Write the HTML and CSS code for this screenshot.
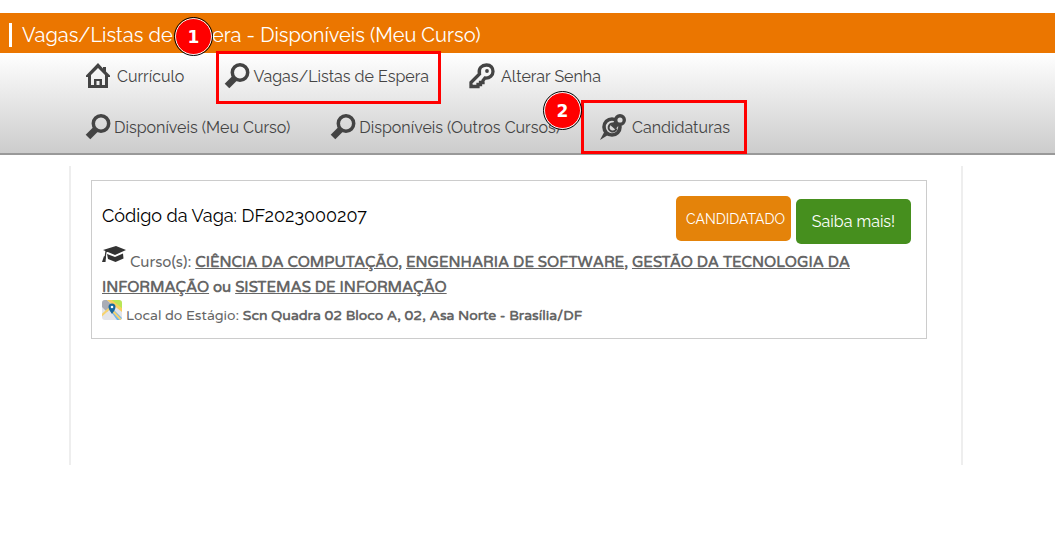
FILE: index.html
```
<!DOCTYPE html>
<html lang="pt-BR">
<head>
<meta charset="utf-8">
<title>Vagas/Listas de Espera</title>
<link rel="stylesheet" href="styles.css">
</head>
<body>
<svg class="sprite" aria-hidden="true">
  <symbol id="search" viewBox="0 0 26 26">
    <path d="M11 15 3 23" fill="none" stroke="currentColor" stroke-width="6.500"/>
    <circle cx="16" cy="9.500" r="7.700" fill="none" stroke="currentColor" stroke-width="3.500"/>
  </symbol>
</svg>
<header class="titlebar"><h1 class="title">Vagas/Listas de Espera - Disponíveis (Meu Curso)</h1><span class="badge badge-one">1</span></header>
<nav class="menu" aria-label="Menu principal">
  <div class="menu-row">
    <a class="item spaced" href="#"><svg class="icon" viewBox="0 0 26 26"><path fill="currentColor" fill-rule="evenodd" d="M13 0 1 12.500V14h2v11h20V14h2v-1.500l-4-4V4h-3v1.500zM13 5l7 7v10h-3v-6H9v6H6V12zM11.500 18h3v4h-3z"/></svg>Currículo</a>
    <a class="item marked" href="#"><svg class="icon"><use href="#search"/></svg>Vagas/Listas de Espera</a>
    <a class="item spaced" href="#"><svg class="icon" viewBox="0 0 26 26"><path fill="none" stroke="currentColor" stroke-width="3.300" d="M10.500 11C9 5 13 2 17.500 2s6.500 3 6.500 6.500-3 7-8 6.500L14 17.500v2h-2.500v2H9v2H2v-4z"/><circle cx="18" cy="8" r="1.900" fill="currentColor"/></svg>Alterar Senha</a>
  </div>
  <div class="menu-row">
    <a class="item" href="#"><svg class="icon"><use href="#search"/></svg>Disponíveis (Meu Curso)</a>
    <a class="item" href="#"><svg class="icon"><use href="#search"/></svg>Disponíveis (Outros Cursos)</a>
    <a class="item spaced marked" href="#"><svg class="icon" viewBox="0 0 26 26"><path d="M0 26 4.500 17.500 8 21z" fill="currentColor"/><circle cx="12" cy="13" r="8" fill="none" stroke="currentColor" stroke-width="3.600"/><path d="M13 9.500a4 4 0 1 0 3.500 5" fill="none" stroke="currentColor" stroke-width="2"/><path d="m13 13.500 5-6" stroke="currentColor" stroke-width="6"/><circle cx="20" cy="6" r="4.300" fill="#ddd" stroke="currentColor" stroke-width="3.400"/></svg>Candidaturas<span class="badge badge-two">2</span></a>
  </div>
</nav>
<main class="content">
  <article class="card">
    <div class="card-head">
      <h2 class="code">Código da Vaga: DF2023000207</h2>
      <div class="actions"><button class="button applied" type="button">CANDIDATADO</button><button class="button more" type="button">Saiba mais!</button></div>
    </div>
    <p class="courses"><svg class="cap" viewBox="0 0 24 17"><path fill="#333" d="M1 4 14 0l10 4-11 5zM5 8l8 3 8-3.500.500 5-8 3.500L6 13z"/><path d="m12 4-8 1.500-1 7" fill="none" stroke="#333" stroke-width="1.300"/><path fill="#333" d="m2 10 2 1-.5 5H0z"/></svg>Curso(s): <b><u>CIÊNCIA DA COMPUTAÇÃO</u>, <u>ENGENHARIA DE SOFTWARE</u>, <u>GESTÃO DA TECNOLOGIA DA INFORMAÇÃO</u> ou <u>SISTEMAS DE INFORMAÇÃO</u></b></p>
    <p class="place"><svg class="map" viewBox="0 0 20 20"><defs><clipPath id="map-clip"><rect width="20" height="20" rx="3"/></clipPath></defs><g clip-path="url(#map-clip)"><path fill="#e3e4e8" d="M0 0h20v20H0z"/><path fill="#a9acb5" d="M0 0h5l5 5-5 7-5-5z"/><path fill="#b9e655" d="M8 0h12v9z"/><path d="m6-1 15 12" stroke="#f8cf60" stroke-width="3"/><path fill="#71b4e8" d="m12 10 8 8v2h-5l-5-7z"/><path d="M-1 16 8 8l12 13" fill="none" stroke="#f7d36e" stroke-width="2"/></g><path fill="#17669c" d="M10 14C8 11 6.500 9 6.500 7a3.500 3.500 0 0 1 7 0c0 2-1.500 4-3.500 7z"/><circle cx="10" cy="7" r="1.300" fill="#fff"/></svg>Local do Estágio: <b>Scn Quadra 02 Bloco A, 02, Asa Norte - Brasília/DF</b></p>
  </article>
</main>
</body>
</html>
```
FILE: styles.css
```
* { box-sizing: border-box; }
body { margin: 0; padding-top: 13px; background: #fff; font-family: Raleway, Lato, sans-serif; }
.sprite { position: absolute; width: 0; height: 0; }
.titlebar { position: relative; display: flex; align-items: center; padding: 10px 9px 6px; background: #eb7600; color: #fff; }
.title { margin: 0; padding-left: 10px; border-left: 3px solid #fff; font-size: 20px; font-weight: 400; line-height: 24px; }
.menu { display: flex; flex-direction: column; gap: 5px; padding: 0 85px 3px; border-bottom: 2px solid #999; background: linear-gradient(#fff, #ccc); }
.menu-row { display: flex; flex-wrap: wrap; gap: 0 40px; }
.item { position: relative; display: flex; align-items: flex-start; gap: 3px; margin: 10px 0 8px; color: #444; font-size: 16px; line-height: 28px; text-decoration: none; }
.spaced { gap: 6px; }
.icon { width: 26px; height: 26px; color: #444; }
.marked::after { content: ""; position: absolute; inset: -12px -12px -13px -8px; border: 3px solid #f00; }
.spaced.marked::after { inset: -14px -17px -12px -19px; }
.badge { position: absolute; z-index: 1; display: grid; place-items: center; width: 37px; height: 37px; border: 1px solid #fff; border-radius: 50%; outline: 1px solid #000; background: #f00; color: #fff; font: bold 17px "DejaVu Sans", sans-serif; }
.badge-one { left: 175px; top: 5px; }
.badge-two { left: -56px; top: -22px; }
.content { min-height: 299px; margin: 11px 92px 0 69px; padding: 14px 34px 0 20px; border: solid #eee; border-width: 0 2px; }
.card { padding: 15px 15px 7px 10px; border: 1px solid #ccc; }
.card-head { display: flex; justify-content: space-between; align-items: flex-start; }
.code { margin: 8px 0 0; color: #000; font-size: 18px; font-weight: 400; line-height: 24px; }
.actions { display: flex; gap: 5px; }
.button { width: 115px; height: 45px; padding: 0; border: 0; border-radius: 5px; color: #fff; font-family: inherit; }
.applied { padding-left: 4px; background: #e4830a; font-size: 14px; }
.more { margin-top: 3px; background: #468f1e; font-size: 16px; }
.courses, .place { margin: 0; color: #666; font-family: "Varela Round", Inter, sans-serif; }
.courses { padding-top: 2px; font-size: 15px; line-height: 25px; }
.place { font-size: 14px; line-height: 30px; }
.cap { width: 24px; height: 17px; margin-right: 4px; vertical-align: 4px; }
.map { width: 20px; height: 20px; margin-right: 4px; vertical-align: 0; }
```
